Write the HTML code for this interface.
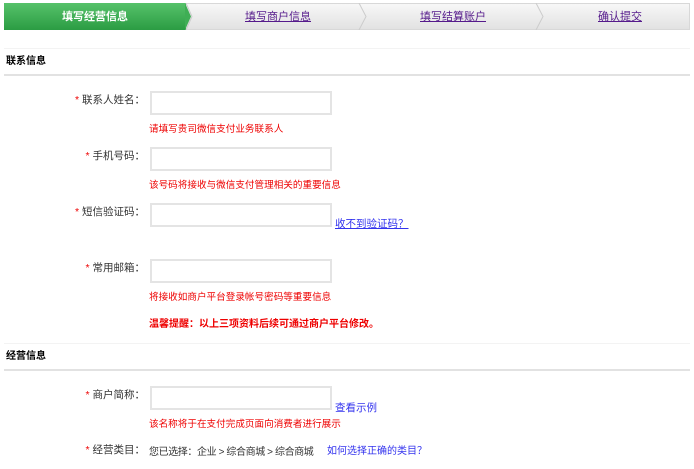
<!DOCTYPE html>
<html><head><meta charset="utf-8"><style>
body{margin:0;width:694px;height:469px;background:#fff;font-family:"Liberation Sans","Noto Sans CJK SC",sans-serif;font-size:10px;color:#333;position:relative;overflow:hidden}
.a{position:absolute;white-space:nowrap}
.steps{position:absolute;left:4px;top:3px;width:686px;height:27px;border:1px solid #d8d8d8;box-sizing:border-box;background:linear-gradient(#f7f7f7,#e2e2e2)}
.green{position:absolute;left:4px;top:3px;height:27px;width:182px;background:linear-gradient(#56c26a,#2b9c43)}
.st{position:absolute;top:8px;font-size:11px;transform:translateX(-50%)}
.st a{color:#551a8b;text-decoration:underline}
.sec{position:absolute;left:4px;width:686px;height:28px;border-top:1px solid #f3f3f3;border-bottom:2px solid #e2e2e2;box-sizing:border-box;font-weight:bold;color:#000;font-size:10px;line-height:12px;padding:7px 0 0 2px}
.lbl{position:absolute;text-align:right;right:549px;white-space:nowrap;font-size:10.5px}
.lbl b{color:#e00;font-weight:normal}
.inp{position:absolute;left:150px;width:182px;height:24px;border:2px solid #e4e4e4;box-sizing:border-box;background:#fff}
.hint{position:absolute;left:149px;color:#e00;white-space:nowrap;font-size:9.6px}
.lnk{position:absolute;color:#3333ee;white-space:nowrap;font-size:10.5px}
</style></head><body>
<div class="steps"></div>
<div class="green"></div>
<svg class="a" style="left:0;top:3px" width="694" height="27">
<polygon points="185,0 191,13.5 185,27 185,0" fill="#3fae55"/>
<polyline points="186,0 192,13.5 186,27" fill="none" stroke="#ccc"/>
<polyline points="359,0 366,13.5 359,27" fill="none" stroke="#ccc"/>
<polyline points="536,0 543,13.5 536,27" fill="none" stroke="#ccc"/>
</svg>
<div class="st" style="left:95px;color:#fff;font-weight:bold">填写经营信息</div>
<div class="st" style="left:278px"><a>填写商户信息</a></div>
<div class="st" style="left:453px"><a>填写结算账户</a></div>
<div class="st" style="left:620px"><a>确认提交</a></div>

<div class="sec" style="top:48px">联系信息</div>
<div class="lbl" style="top:92px"><b>*</b> 联系人姓名：</div>
<div class="inp" style="top:91px"></div>
<div class="hint" style="top:121px">请填写贵司微信支付业务联系人</div>
<div class="lbl" style="top:148px"><b>*</b> 手机号码：</div>
<div class="inp" style="top:147px"></div>
<div class="hint" style="top:177px">该号码将接收与微信支付管理相关的重要信息</div>
<div class="lbl" style="top:204px"><b>*</b> 短信验证码：</div>
<div class="inp" style="top:203px"></div>
<div class="lnk" style="left:335px;top:216px;text-decoration:underline">收不到验证码？</div>
<div class="lbl" style="top:260px"><b>*</b> 常用邮箱：</div>
<div class="inp" style="top:259px"></div>
<div class="hint" style="top:289px">将接收如商户平台登录帐号密码等重要信息</div>
<div class="hint" style="top:315px;font-weight:bold;font-size:10px">温馨提醒：以上三项资料后续可通过商户平台修改。</div>

<div class="sec" style="top:343px">经营信息</div>
<div class="lbl" style="top:387px"><b>*</b> 商户简称：</div>
<div class="inp" style="top:386px"></div>
<div class="lnk" style="left:335px;top:400px">查看示例</div>
<div class="hint" style="top:416px">该名称将于在支付完成页面向消费者进行展示</div>
<div class="lbl" style="top:442px"><b>*</b> 经营类目：</div>
<div class="a" style="left:149px;top:443px;font-size:10px;letter-spacing:-0.4px">您已选择：企业 &gt; 综合商城 &gt; 综合商城</div>
<div class="lnk" style="left:327px;top:442px;font-size:10px">如何选择正确的类目？</div>
</body></html>
